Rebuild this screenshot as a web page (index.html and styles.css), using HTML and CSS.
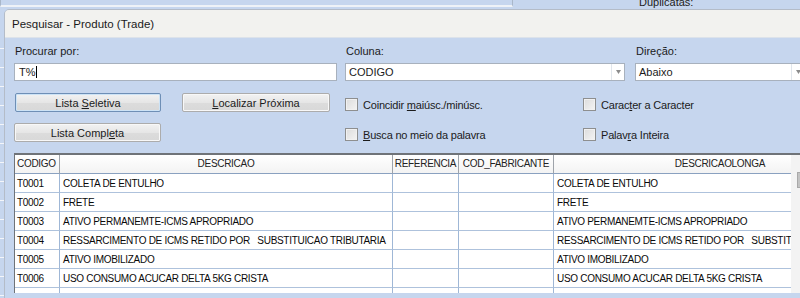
FILE: index.html
```html
<!DOCTYPE html>
<html lang="pt">
<head>
<meta charset="utf-8">
<title>Pesquisar - Produto (Trade)</title>
<link rel="stylesheet" href="styles.css">
</head>
<body>
<div class="desk">
  <div class="behind-box"></div>
  <div class="behind-label">Duplicatas:</div>
  <div class="behind-left"></div>
  <div class="dialog">
    <div class="titlebar">Pesquisar - Produto (Trade)</div>
    <div class="dlg-body">
      <div class="search-row">
        <div class="field f-search">
          <div class="lbl">Procurar por:</div>
          <div class="input"><span>T%</span><span class="caret"></span></div>
        </div>
        <div class="field f-col">
          <div class="lbl">Coluna:</div>
          <div class="combo"><span class="combo-text">CODIGO</span><span class="combo-btn"><svg width="5" height="4" viewBox="0 0 5 4"><path d="M0 0h5L2.5 4z" fill="#8c8c8c"/></svg></span></div>
        </div>
        <div class="field f-dir">
          <div class="lbl">Direção:</div>
          <div class="combo combo-dir"><span class="combo-text">Abaixo</span><span class="combo-btn"><svg width="5" height="4" viewBox="0 0 5 4"><path d="M0 0h5L2.5 4z" fill="#8c8c8c"/></svg></span></div>
        </div>
      </div>
      <div class="controls">
        <div class="btn btn-default"><span>Lista <u>S</u>eletiva</span></div>
        <div class="btn btn-wide"><span><u>L</u>ocalizar Próxima</span></div>
        <div class="chk"><span class="box"></span><span>Coincidir <u>m</u>aiúsc./minúsc.</span></div>
        <div class="chk"><span class="box"></span><span>Carac<u>t</u>er a Caracter</span></div>
        <div class="btn"><span>Lista Compl<u>e</u>ta</span></div>
        <div class="spacer"></div>
        <div class="chk"><span class="box"></span><span><u>B</u>usca no meio da palavra</span></div>
        <div class="chk"><span class="box"></span><span>Palav<u>r</u>a Inteira</span></div>
      </div>
      <div class="grid-box">
        <div class="grid-view">
          <div class="grid">
            <div class="g-row g-head">
              <div class="g-cell left">CODIGO</div><div class="g-cell">DESCRICAO</div><div class="g-cell">REFERENCIA</div><div class="g-cell">COD_FABRICANTE</div><div class="g-cell">DESCRICAOLONGA</div>
            </div>
            <div class="g-row"><div class="g-cell">T0001</div><div class="g-cell">COLETA DE ENTULHO</div><div class="g-cell"></div><div class="g-cell"></div><div class="g-cell">COLETA DE ENTULHO</div></div>
            <div class="g-row"><div class="g-cell">T0002</div><div class="g-cell">FRETE</div><div class="g-cell"></div><div class="g-cell"></div><div class="g-cell">FRETE</div></div>
            <div class="g-row"><div class="g-cell">T0003</div><div class="g-cell">ATIVO PERMANEMTE-ICMS APROPRIADO</div><div class="g-cell"></div><div class="g-cell"></div><div class="g-cell">ATIVO PERMANEMTE-ICMS APROPRIADO</div></div>
            <div class="g-row"><div class="g-cell">T0004</div><div class="g-cell">RESSARCIMENTO DE ICMS RETIDO POR   SUBSTITUICAO TRIBUTARIA</div><div class="g-cell"></div><div class="g-cell"></div><div class="g-cell">RESSARCIMENTO DE ICMS RETIDO POR   SUBSTITUICAO TRIBUTARIA</div></div>
            <div class="g-row"><div class="g-cell">T0005</div><div class="g-cell">ATIVO IMOBILIZADO</div><div class="g-cell"></div><div class="g-cell"></div><div class="g-cell">ATIVO IMOBILIZADO</div></div>
            <div class="g-row"><div class="g-cell">T0006</div><div class="g-cell">USO CONSUMO ACUCAR DELTA 5KG CRISTA</div><div class="g-cell"></div><div class="g-cell"></div><div class="g-cell">USO CONSUMO ACUCAR DELTA 5KG CRISTA</div></div>
            <div class="g-row"><div class="g-cell">T0007</div><div class="g-cell">USO CONSUMO FILTROS</div><div class="g-cell"></div><div class="g-cell"></div><div class="g-cell">USO CONSUMO FILTROS</div></div>
          </div>
        </div>
        <div class="vscroll"><div class="thumb"></div></div>
      </div>
    </div>
  </div>
</div>
</body>
</html>
```
FILE: styles.css
```css
* { box-sizing: border-box; }
html, body { margin: 0; padding: 0; }
body {
  width: 800px;
  height: 298px;
  overflow: hidden;
  background: #c6d6ee;
  font-family: "Liberation Sans", Arial, sans-serif;
  font-size: 11px;
  color: #1b1b1b;
}
.desk {
  position: relative;
  width: 800px;
  height: 298px;
  overflow: hidden;
}
.behind-box {
  position: absolute;
  left: 0;
  top: -12px;
  width: 513px;
  height: 19px;
  border: 1px solid #a9b7c9;
  border-bottom: 2px solid #eef2f7;
}
.behind-label {
  position: absolute;
  left: 639px;
  top: -4px;
  font-size: 11px;
  color: #222;
}
.behind-left {
  position: absolute;
  left: 0;
  top: 30px;
  width: 5px;
  height: 268px;
  background: repeating-linear-gradient(to bottom, #c6d6ee 0, #c6d6ee 18px, #f4f6fa 18px, #f4f6fa 19px);
}
.dialog {
  position: absolute;
  left: 4px;
  top: 9px;
  width: 820px;
  height: 310px;
  border: 1px solid #b4bcc8;
  border-radius: 5px 0 0 0;
  background: #c6d6ee;
  overflow: hidden;
}
.titlebar {
  height: 28px;
  background: #f2f2ef;
  border-bottom: 1px solid #dde3ea;
  padding-left: 7px;
  line-height: 28px;
  font-size: 11.5px;
  color: #1a1a1a;
}
.dlg-body {
  padding: 7px 0 0 9px;
}
.search-row {
  display: grid;
  grid-template-columns: 331px 290px 1fr;
}
.lbl {
  height: 13px;
  line-height: 13px;
  margin-bottom: 5px;
  padding-left: 1px;
}
.input, .combo {
  height: 18px;
  background: #fff;
  border: 1px solid #a8b1bd;
  display: flex;
  align-items: center;
  padding-left: 4px;
}
.f-search .input { width: 323px; }
.f-col .combo { width: 280px; }
.f-dir .combo { width: 170px; }
.caret {
  display: inline-block;
  width: 1px;
  height: 12px;
  background: #000;
}
.combo { padding-left: 3px; padding-right: 0; }
.combo-text { flex: 1; }
.combo-btn {
  width: 13px;
  height: 16px;
  border-left: 1px solid #e1e6ec;
  display: flex;
  align-items: center;
  justify-content: center;
}
.controls {
  margin-top: 12px;
  display: grid;
  grid-template-columns: 168px 163px 238px 1fr;
  grid-auto-rows: 19px;
  row-gap: 11px;
}
.btn {
  width: 147px;
  height: 19px;
  border: 1px solid #acacac;
  border-radius: 2px;
  background: linear-gradient(#f2f2f2, #e6e6e6 50%, #dcdcdc 51%, #d8d8d8);
  display: flex;
  align-items: center;
  justify-content: center;
  color: #1b1b1b;
  box-shadow: inset 0 0 0 1px #f8f8f8;
}
.btn-wide { width: 148px; }
.btn-default {
  border-color: #6e8fb6;
  box-shadow: inset 0 0 0 1px #cde3f6;
  margin-left: 1px;
  width: 146px;
}
.chk {
  display: flex;
  align-items: center;
  padding-top: 4px;
  letter-spacing: -0.2px;
}
.box {
  width: 13px;
  height: 13px;
  border: 1px solid #8e8f8f;
  background: linear-gradient(135deg, #dcdcdc, #f4f4f4);
  box-shadow: inset 0 0 0 1px #f1f1f1;
  margin-right: 5px;
  flex: none;
}
.grid-box {
  margin-top: 11px;
  display: flex;
  height: 140px;
  border-top: 2px solid #6f7378;
  border-left: 1px solid #6f7378;
  background: #fff;
}
.grid-view {
  width: 776px;
  overflow: hidden;
  flex: none;
}
.grid {
  width: 872px;
  font-size: 10px;
  letter-spacing: -0.3px;
  color: #0a0a0a;
}
.g-row {
  display: grid;
  grid-template-columns: 45px 333px 66px 95px 333px;
  height: 19px;
}
.g-cell {
  height: 19px;
  line-height: 18px;
  padding-top: 1px;
  padding-left: 3px;
  border-right: 1px solid #9fb7d6;
  border-bottom: 1px solid #aec2dc;
  white-space: pre;
  overflow: hidden;
}
.g-cell:first-child { padding-left: 2px; }
.g-head .g-cell {
  text-align: center;
  padding: 0;
  background: linear-gradient(#ffffff, #f3f3f3);
  border-right-color: #9ea3aa;
  border-bottom-color: #8aa1c0;
  display: flex;
  justify-content: center;
  align-items: center;
  color: #222;
}
.g-head .g-cell.left { justify-content: flex-start; padding-left: 2px; }
.vscroll {
  flex: none;
  width: 20px;
  background: #f3f3f3;
  position: relative;
}
.thumb {
  position: absolute;
  left: 6px;
  top: 17px;
  width: 12px;
  height: 16px;
  background: #c3c3c3;
  border: 1px solid #a9a9a9;
}
```
